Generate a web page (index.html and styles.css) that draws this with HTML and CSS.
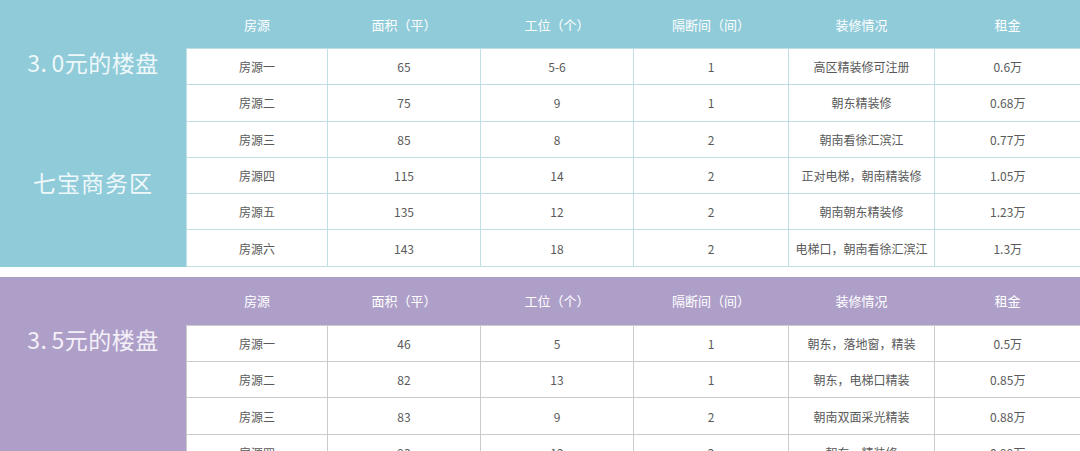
FILE: index.html
```html
<!DOCTYPE html>
<html lang="zh">
<head>
<meta charset="utf-8">
<title>楼盘</title>
<link rel="stylesheet" href="styles.css">
</head>
<body>
<section class="block block-blue">
  <div class="side">
    <div class="title">3<span class="dot">.</span>0元的楼盘</div>
    <div class="title title-area">七宝商务区</div>
  </div>
  <table class="grid">
    <colgroup>
      <col class="c1"><col class="c2"><col class="c3"><col class="c4"><col class="c5"><col class="c6">
    </colgroup>
    <thead>
      <tr><th>房源</th><th>面积（平）</th><th>工位（个）</th><th>隔断间（间）</th><th>装修情况</th><th>租金</th></tr>
    </thead>
    <tbody>
      <tr><td>房源一</td><td>65</td><td>5-6</td><td>1</td><td>高区精装修可注册</td><td>0.6万</td></tr>
      <tr><td>房源二</td><td>75</td><td>9</td><td>1</td><td>朝东精装修</td><td>0.68万</td></tr>
      <tr><td>房源三</td><td>85</td><td>8</td><td>2</td><td>朝南看徐汇滨江</td><td>0.77万</td></tr>
      <tr><td>房源四</td><td>115</td><td>14</td><td>2</td><td>正对电梯，朝南精装修</td><td>1.05万</td></tr>
      <tr><td>房源五</td><td>135</td><td>12</td><td>2</td><td>朝南朝东精装修</td><td>1.23万</td></tr>
      <tr><td>房源六</td><td>143</td><td>18</td><td>2</td><td>电梯口，朝南看徐汇滨江</td><td>1.3万</td></tr>
    </tbody>
  </table>
</section>
<section class="block block-purple">
  <div class="side">
    <div class="title">3<span class="dot">.</span>5元的楼盘</div>
  </div>
  <table class="grid">
    <colgroup>
      <col class="c1"><col class="c2"><col class="c3"><col class="c4"><col class="c5"><col class="c6">
    </colgroup>
    <thead>
      <tr><th>房源</th><th>面积（平）</th><th>工位（个）</th><th>隔断间（间）</th><th>装修情况</th><th>租金</th></tr>
    </thead>
    <tbody>
      <tr><td>房源一</td><td>46</td><td>5</td><td>1</td><td>朝东，落地窗，精装</td><td>0.5万</td></tr>
      <tr><td>房源二</td><td>82</td><td>13</td><td>1</td><td>朝东，电梯口精装</td><td>0.85万</td></tr>
      <tr><td>房源三</td><td>83</td><td>9</td><td>2</td><td>朝南双面采光精装</td><td>0.88万</td></tr>
      <tr><td>房源四</td><td>93</td><td>12</td><td>2</td><td>朝东，精装修</td><td>0.99万</td></tr>
    </tbody>
  </table>
</section>
</body>
</html>
```

FILE: styles.css
```css
html, body {
  margin: 0;
  padding: 0;
  background: #ffffff;
  font-family: "Noto Sans CJK SC", "Noto Sans", sans-serif;
}

body {
  width: 1080px;
  height: 451px;
  overflow: hidden;
}

.block {
  display: grid;
  grid-template-columns: 186px 1fr;
}

.block-blue {
  background: #90cbd9;
  --line: #bfdfe5;
}

.block-purple {
  background: #ae9fc9;
  margin-top: 10px;
  --line: #cbcbcb;
}

.side {
  display: flex;
  flex-direction: column;
  align-items: center;
  padding-top: 48px;
}

.title {
  color: #eef8fa;
  font-size: 23px;
  line-height: 28px;
  letter-spacing: 0.5px;
}

.block-purple .title {
  color: #f4f0f8;
}

.dot {
  margin-right: 4px;
}

.title-area {
  margin-top: 92px;
  letter-spacing: 1px;
}

.grid {
  border-collapse: collapse;
  table-layout: fixed;
  width: 894px;
}

.c1 { width: 141px; }
.c2 { width: 153px; }
.c3 { width: 153px; }
.c4 { width: 155px; }
.c5 { width: 146px; }
.c6 { width: 146px; }

.grid th {
  height: 48px;
  padding: 0;
  color: #ffffff;
  font-size: 13px;
  font-weight: normal;
  text-align: center;
  vertical-align: middle;
}

.grid td {
  height: 35.3px;
  padding: 0;
  background: #ffffff;
  color: #5a5a5a;
  font-size: 12px;
  text-align: center;
  vertical-align: middle;
  border: 1px solid var(--line);
}

.grid tr td:last-child {
  border-right: none;
}
```
